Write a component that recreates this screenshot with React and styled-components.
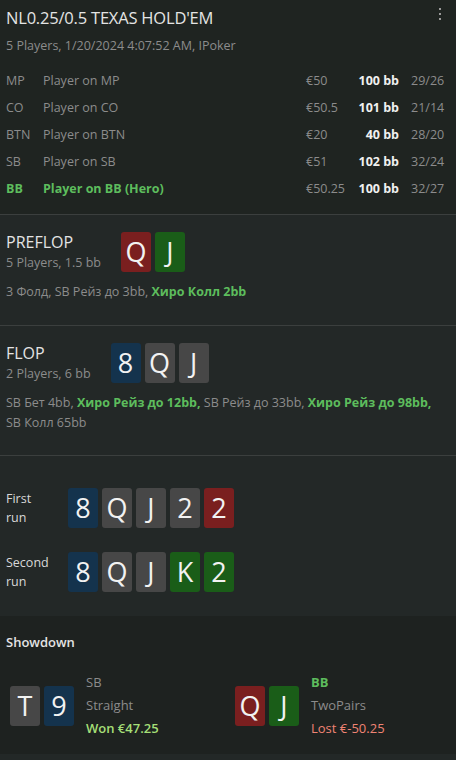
import React from 'react';
import styled, { createGlobalStyle } from 'styled-components';

const GlobalStyle = createGlobalStyle`
  html, body {
    margin: 0;
    padding: 0;
    background: #232827;
  }
  body {
    font-family: 'Open Sans', 'Noto Sans', 'Liberation Sans', sans-serif;
    color: #8c8c8c;
  }
`;

const Page = styled.div`
  width: 456px;
  height: 760px;
  overflow: hidden;
  background: #232827;
`;

const Header = styled.header`
  position: relative;
  background: #1f2421;
  padding: 6px 6px 12px;
  border-bottom: 1px solid #3b3f3e;
`;

const Title = styled.div`
  font-size: 16.5px;
  line-height: 24px;
  color: #e4e4e4;
  letter-spacing: -0.2px;
`;

const Kebab = styled.div`
  position: absolute;
  top: 8px;
  right: 15px;
  display: flex;
  flex-direction: column;
  gap: 3px;

  span {
    width: 2px;
    height: 2px;
    background: #9a9a9a;
  }
`;

const Subtitle = styled.div`
  font-size: 12.5px;
  line-height: 20px;
  margin-top: 6px;
  color: #8c8c8c;
`;

const PlayerTable = styled.div`
  margin-top: 11px;
  display: grid;
  grid-template-columns: 37px 1fr 48px 45px 51px;
  grid-auto-rows: 27px;
  align-items: center;
  font-size: 12.5px;
`;

const Cell = styled.div`
  color: ${(p) => (p.hero ? '#5dbd5d' : p.strong ? '#f0f0f0' : '#8c8c8c')};
  font-weight: ${(p) => (p.hero || p.strong ? 700 : 400)};
  text-align: ${(p) => (p.right ? 'right' : 'left')};
  padding-left: ${(p) => (p.pad ? '12px' : '0')};
  white-space: nowrap;
`;

const Section = styled.section`
  padding: ${(p) => p.pad || '16px 6px 22px'};
  border-bottom: ${(p) => (p.last ? 'none' : '1px solid #3b3f3e')};
`;

const StreetRow = styled.div`
  display: flex;
  align-items: center;
  gap: 20px;
`;

const StreetInfo = styled.div`
  display: flex;
  flex-direction: column;
`;

const StreetName = styled.div`
  font-size: 16px;
  line-height: 22px;
  color: #e4e4e4;
`;

const StreetSub = styled.div`
  font-size: 12.5px;
  line-height: 20px;
  color: #8c8c8c;
`;

const Cards = styled.div`
  display: flex;
  gap: 4px;
`;

const cardColors = {
  s: '#474747',
  d: '#14334d',
  h: '#7a1f1f',
  c: '#1a5d18',
};

const Card = styled.div`
  width: 30px;
  height: 40px;
  border-radius: 3px;
  background: ${(p) => cardColors[p.suit]};
  color: #f2f2f2;
  font-size: 27px;
  line-height: 40px;
  text-align: center;
`;

const Actions = styled.div`
  margin-top: 9px;
  padding-right: 14px;
  font-size: 12.5px;
  line-height: 20px;
  color: #8c8c8c;

  b {
    color: #5dbd5d;
    font-weight: 700;
  }
`;

const RunRow = styled.div`
  display: flex;
  align-items: center;
  & + & {
    margin-top: 24px;
  }
`;

const RunLabel = styled.div`
  width: 62px;
  font-size: 12.5px;
  line-height: 19px;
  color: #d8d8d8;
`;

const Showdown = styled.div`
  background: #1e2220;
  padding: 16px 6px 14px;
`;

const ShowdownTitle = styled.div`
  font-size: 13px;
  line-height: 20px;
  color: #e4e4e4;
  font-weight: 600;
`;

const ShowdownGrid = styled.div`
  margin-top: 19px;
  padding-left: 4px;
  display: grid;
  grid-template-columns: 225px 1fr;
`;

const Hand = styled.div`
  display: flex;
  align-items: center;
  gap: 12px;
`;

const HandInfo = styled.div`
  font-size: 13px;
  line-height: 23px;
  color: #8c8c8c;
`;

const Seat = styled.div`
  color: ${(p) => (p.hero ? '#5dbd5d' : '#8c8c8c')};
  font-weight: ${(p) => (p.hero ? 700 : 400)};
`;

const Result = styled.div`
  color: ${(p) => (p.won ? '#a5df77' : '#f08474')};
  font-weight: ${(p) => (p.won ? 600 : 400)};
`;

const players = [
  { pos: 'MP', name: 'Player on MP', stack: '€50', bb: '100 bb', stats: '29/26' },
  { pos: 'CO', name: 'Player on CO', stack: '€50.5', bb: '101 bb', stats: '21/14' },
  { pos: 'BTN', name: 'Player on BTN', stack: '€20', bb: '40 bb', stats: '28/20' },
  { pos: 'SB', name: 'Player on SB', stack: '€51', bb: '102 bb', stats: '32/24' },
  { pos: 'BB', name: 'Player on BB (Hero)', stack: '€50.25', bb: '100 bb', stats: '32/27', hero: true },
];

const CardList = ({ cards }) => (
  <Cards>
    {cards.map((c, i) => (
      <Card key={i} suit={c[1]}>
        {c[0]}
      </Card>
    ))}
  </Cards>
);

const App = () => {
  return (
    <Page>
      <GlobalStyle />
      <Header>
        <Title>NL0.25/0.5 TEXAS HOLD'EM</Title>
        <Kebab>
          <span />
          <span />
          <span />
        </Kebab>
        <Subtitle>5 Players, 1/20/2024 4:07:52 AM, IPoker</Subtitle>
        <PlayerTable>
          {players.map((p) => (
            <React.Fragment key={p.pos}>
              <Cell hero={p.hero}>{p.pos}</Cell>
              <Cell hero={p.hero}>{p.name}</Cell>
              <Cell>{p.stack}</Cell>
              <Cell strong right>{p.bb}</Cell>
              <Cell pad>{p.stats}</Cell>
            </React.Fragment>
          ))}
        </PlayerTable>
      </Header>

      <Section pad="16px 6px 23px">
        <StreetRow>
          <StreetInfo>
            <StreetName>PREFLOP</StreetName>
            <StreetSub>5 Players, 1.5 bb</StreetSub>
          </StreetInfo>
          <CardList cards={['Qh', 'Jc']} />
        </StreetRow>
        <Actions>
          3 Фолд, SB Рейз до 3bb, <b>Хиро Колл 2bb</b>
        </Actions>
      </Section>

      <Section>
        <StreetRow>
          <StreetInfo>
            <StreetName>FLOP</StreetName>
            <StreetSub>2 Players, 6 bb</StreetSub>
          </StreetInfo>
          <CardList cards={['8d', 'Qs', 'Js']} />
        </StreetRow>
        <Actions>
          SB Бет 4bb, <b>Хиро Рейз до 12bb,</b> SB Рейз до 33bb, <b>Хиро Рейз до 98bb,</b> SB Колл 65bb
        </Actions>
      </Section>

      <Section pad="32px 6px 24px" last>
        <RunRow>
          <RunLabel>
            First
            <br />
            run
          </RunLabel>
          <CardList cards={['8d', 'Qs', 'Js', '2s', '2h']} />
        </RunRow>
        <RunRow>
          <RunLabel>
            Second
            <br />
            run
          </RunLabel>
          <CardList cards={['8d', 'Qs', 'Js', 'Kc', '2c']} />
        </RunRow>
      </Section>

      <Showdown>
        <ShowdownTitle>Showdown</ShowdownTitle>
        <ShowdownGrid>
          <Hand>
            <CardList cards={['Ts', '9d']} />
            <HandInfo>
              <Seat>SB</Seat>
              <div>Straight</div>
              <Result won>Won €47.25</Result>
            </HandInfo>
          </Hand>
          <Hand>
            <CardList cards={['Qh', 'Jc']} />
            <HandInfo>
              <Seat hero>BB</Seat>
              <div>TwoPairs</div>
              <Result>Lost €-50.25</Result>
            </HandInfo>
          </Hand>
        </ShowdownGrid>
      </Showdown>
    </Page>
  );
};

export default App;
